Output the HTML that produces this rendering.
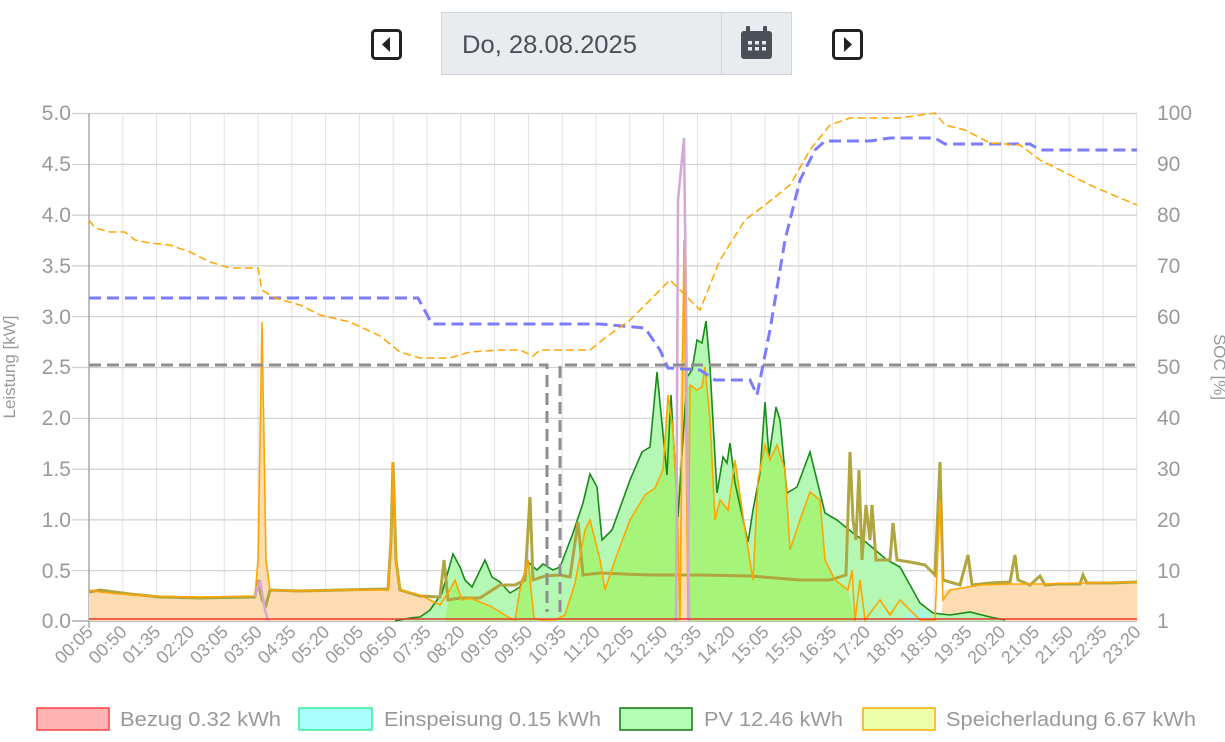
<!DOCTYPE html>
<html><head><meta charset="utf-8"><style>
body{margin:0;background:#fff;width:1225px;height:742px;overflow:hidden;font-family:"Liberation Sans",sans-serif}
svg{position:absolute;left:0;top:0}
</style></head><body>
<svg width="1225" height="742" viewBox="0 0 1225 742">
<!-- nav -->
<rect x="372.5" y="30.5" width="28" height="28" rx="3" fill="#fff" stroke="#222" stroke-width="3"/>
<path d="M390 37 L382 44.5 L390 52 Z" fill="#222"/>
<rect x="833.5" y="30.5" width="28" height="28" rx="3" fill="#fff" stroke="#222" stroke-width="3"/>
<path d="M844 37 L852 44.5 L844 52 Z" fill="#222"/>
<rect x="441.5" y="12.5" width="350" height="62" fill="#e9ecef" stroke="#ced4da"/>
<line x1="721.5" y1="12.5" x2="721.5" y2="74.5" stroke="#ced4da"/>
<text x="462" y="53" font-size="25" fill="#495057" textLength="175" lengthAdjust="spacingAndGlyphs">Do, 28.08.2025</text>
<rect x="741" y="31" width="31" height="28" rx="3" fill="#495057"/>
<rect x="746" y="26" width="4" height="7" rx="1" fill="#495057"/>
<rect x="763" y="26" width="4" height="7" rx="1" fill="#495057"/>
<rect x="744" y="38" width="25" height="18" fill="#495057"/>
<g fill="#e9ecef"><rect x="748" y="41" width="4" height="3.5"/><rect x="755" y="41" width="4" height="3.5"/><rect x="762" y="41" width="4" height="3.5"/><rect x="748" y="47" width="4" height="3.5"/><rect x="755" y="47" width="4" height="3.5"/><rect x="762" y="47" width="4" height="3.5"/></g>
<!-- grid -->
<g stroke="#e2e2e2" stroke-width="1">
<path d="M89 113V621M122.8 113V621M156.6 113V621M190.4 113V621M224.2 113V621M258 113V621M291.8 113V621M325.6 113V621M359.4 113V621M393.2 113V621M427 113V621M460.8 113V621M494.6 113V621M528.4 113V621M562.2 113V621M596 113V621M629.8 113V621M663.6 113V621M697.4 113V621M731.2 113V621M765 113V621M798.8 113V621M832.6 113V621M866.4 113V621M900.2 113V621M934 113V621M967.8 113V621M1001.6 113V621M1035.4 113V621M1069.2 113V621M1103 113V621M1136.8 113V621"/>
</g>
<g stroke="#cfcfcf" stroke-width="1.2">
<path d="M72 113.5H1137M72 164.3H1137M72 215.1H1137M72 265.9H1137M72 316.7H1137M72 367.5H1137M72 418.3H1137M72 469.1H1137M72 519.9H1137M72 570.7H1137"/>
</g>
<path d="M72 621H1137M89 113V628" stroke="#aaa" stroke-width="1.5"/>
<!-- y labels -->
<g font-size="21" fill="#999" text-anchor="end">
<text x="71" y="120">5.0</text><text x="71" y="171">4.5</text><text x="71" y="222">4.0</text><text x="71" y="273">3.5</text><text x="71" y="324">3.0</text><text x="71" y="374">2.5</text><text x="71" y="425">2.0</text><text x="71" y="476">1.5</text><text x="71" y="527">1.0</text><text x="71" y="578">0.5</text><text x="71" y="628">0.0</text>
</g>
<g font-size="21" fill="#999">
<text x="1157" y="120">100</text><text x="1157" y="171">90</text><text x="1157" y="222">80</text><text x="1157" y="273">70</text><text x="1157" y="324">60</text><text x="1157" y="374">50</text><text x="1157" y="425">40</text><text x="1157" y="476">30</text><text x="1157" y="527">20</text><text x="1157" y="578">10</text><text x="1157" y="628">1</text>
</g>
<text transform="translate(15,367) rotate(-90)" font-size="17" fill="#999" text-anchor="middle">Leistung [kW]</text>
<text transform="translate(1214,367) rotate(90)" font-size="17" fill="#999" text-anchor="middle">SOC [%]</text>
<!-- peach storage fill -->
<path d="M89 621 L89 590 L100 592 L120 594 L150 596 L200 597 L255 596 L258 560 L262 322 L266 560 L270 590 L300 591 L340 590 L388 590 L391 540 L393 462 L396 560 L400 590 L420 595 L440 605 L440 621 Z" fill="#fcdcb0"/>
<path d="M940 621 L945 590 L980 585 L1010 584 L1040 584 L1080 583 L1137 582 L1137 621 Z" fill="#fcdcb0"/>
<!-- PV fill -->
<path d="M395 621 L410 618 L420 617 L430 610 L442 593 L453 554 L460 567 L465 580 L472 587 L485 560 L492 577 L500 582 L510 593 L520 587 L528 562 L537 570 L543 564 L553 570 L560 567 L573 533 L583 503 L590 474 L597 487 L602 540 L612 530 L630 480 L642 452 L650 447 L657 372 L667 475 L671 395 L678 517 L687 377 L692 370 L697 340 L702 343 L706 321 L710 367 L717 493 L723 457 L727 463 L730 443 L735 483 L748 542 L753 510 L760 473 L765 402 L769 457 L776 407 L780 420 L787 493 L797 487 L810 452 L825 513 L837 520 L853 533 L867 543 L887 560 L900 567 L920 603 L933 613 L950 615 L970 612 L990 617 L1005 620 L1005 621 Z" fill="#b4f8b4"/>
<path d="M445 621 L450 590 L455 580 L462 600 L470 598 L480 602 L490 606 L500 612 L510 618 L515 620 L520 590 L528 560 L534 618 L540 620 L555 620 L565 615 L575 583 L585 530 L590 520 L600 560 L605 590 L615 560 L630 520 L645 495 L655 488 L663 470 L668 395 L673 430 L677 500 L685 390 L690 385 L697 390 L702 387 L705 367 L710 420 L715 520 L720 500 L728 510 L735 460 L745 530 L753 580 L758 480 L765 445 L770 460 L777 445 L785 470 L790 550 L800 520 L810 492 L820 500 L825 560 L835 580 L848 590 L855 621 Z" fill="#a6f57a"/>
<path d="M679 621 L680 400 L684 240 L688 400 L690 621 Z" fill="#fcdcb0"/>
<path d="M903 621 L908 612 L920 608 L930 612 L933 621 Z" fill="#aaf5d8"/>
<path d="M395 621 L410 618 L420 617 L430 610 L442 593 L453 554 L460 567 L465 580 L472 587 L485 560 L492 577 L500 582 L510 593 L520 587 L528 562 L537 570 L543 564 L553 570 L560 567 L573 533 L583 503 L590 474 L597 487 L602 540 L612 530 L630 480 L642 452 L650 447 L657 372 L667 475 L671 395 L678 517 L687 377 L692 370 L697 340 L702 343 L706 321 L710 367 L717 493 L723 457 L727 463 L730 443 L735 483 L748 542 L753 510 L760 473 L765 402 L769 457 L776 407 L780 420 L787 493 L797 487 L810 452 L825 513 L837 520 L853 533 L867 543 L887 560 L900 567 L920 603 L933 613 L950 615 L970 612 L990 617 L1005 620" fill="none" stroke="#1a8a1a" stroke-width="1.6"/>
<!-- olive house line -->
<path d="M89 592 L100 590 L130 594 L160 597 L200 598 L255 597 L258 580 L262 600 L266 605 L270 590 L300 591 L340 590 L388 589 L391 540 L393 462 L396 560 L400 590 L420 596 L440 597 L444 560 L448 600 L460 598 L480 598 L500 585 L515 585 L525 580 L530 497 L533 580 L545 576 L560 575 L570 577 L578 522 L583 575 L600 573 L650 575 L700 575 L750 576 L800 580 L830 580 L846 575 L850 452 L853 520 L856 540 L859 470 L862 560 L866 505 L870 540 L872 505 L876 560 L890 560 L893 523 L897 560 L910 562 L925 565 L935 575 L940 462 L943 580 L960 585 L968 555 L972 585 L990 583 L1010 582 L1015 555 L1018 580 L1030 585 L1040 576 L1045 585 L1060 584 L1080 584 L1083 575 L1087 583 L1110 583 L1137 582" fill="none" stroke="#b0a640" stroke-width="3"/>
<!-- orange storage line -->
<path d="M89 590 L100 592 L120 594 L150 596 L200 597 L255 596 L258 560 L262 322 L266 560 L270 590 L300 591 L340 590 L388 590 L391 540 L393 462 L396 560 L400 590 L420 595 L440 605 L450 590 L455 580 L462 600 L470 598 L480 602 L490 606 L500 612 L510 618 L515 620 L520 590 L528 560 L534 618 L540 620 L555 620 L565 615 L575 583 L585 530 L590 520 L600 560 L605 590 L615 560 L630 520 L645 495 L655 488 L663 470 L668 395 L673 430 L677 500 L680 620 L684 240 L688 620 L690 385 L697 390 L702 387 L705 367 L710 420 L715 520 L720 500 L728 510 L735 460 L745 530 L753 580 L758 480 L765 445 L770 460 L777 445 L785 470 L790 550 L800 520 L810 492 L820 500 L825 560 L835 580 L848 590 L852 570 L855 621 L860 580 L865 620 L880 600 L890 615 L900 600 L920 620 L935 620 L940 500 L943 600 L950 590 L980 585 L1010 584 L1040 584 L1080 583 L1137 582" fill="none" stroke="#ffa500" stroke-width="1.6"/>
<!-- purple -->
<path d="M255 597 L260 580 L265 610 L268 621 M676 621 L678 200 L684 138 L686 300 L689 621" fill="none" stroke="#d4a8d4" stroke-width="2.5"/>
<!-- red baseline -->
<path d="M89 619 L1137 619" stroke="#e33" stroke-width="1.5"/>
<!-- gray dashed -->
<path d="M89 365 L547 365 L547 612 M560 612 L560 365 L1137 365" fill="none" stroke="#8e8e8e" stroke-width="3" stroke-dasharray="12,6"/>
<!-- SOC blue -->
<path d="M89 298 L418 298 L432 324 L600 324 L645 328 L660 350 L668 368 L700 370 L715 380 L750 380 L757 395 L770 330 L785 240 L800 180 L815 150 L825 141 L870 141 L890 138 L935 138 L945 144 L1030 144 L1040 150 L1137 150" fill="none" stroke="#7b7bff" stroke-width="3" stroke-dasharray="12,6"/>
<!-- SOC orange thin -->
<path d="M89 220 L95 228 L110 232 L125 232 L135 240 L150 243 L170 245 L190 252 L210 262 L230 268 L258 268 L262 290 L275 298 L300 305 L320 315 L350 322 L380 336 L400 352 L420 358 L450 358 L470 352 L500 350 L520 350 L533 356 L540 350 L590 350 L605 338 L630 320 L650 300 L670 280 L690 300 L700 310 L720 260 L745 220 L765 205 L790 185 L810 150 L830 125 L850 118 L870 118 L900 118 L935 113 L945 125 L965 130 L990 143 L1020 145 L1040 160 L1060 170 L1090 185 L1120 198 L1137 205" fill="none" stroke="#ffa500" stroke-width="1.5" stroke-dasharray="8,4"/>
<!-- x labels -->
<g font-size="18" fill="#999" text-anchor="end">
<text transform="translate(94,633) rotate(-45)">00:05</text>
<text transform="translate(127.8,633) rotate(-45)">00:50</text>
<text transform="translate(161.6,633) rotate(-45)">01:35</text>
<text transform="translate(195.4,633) rotate(-45)">02:20</text>
<text transform="translate(229.2,633) rotate(-45)">03:05</text>
<text transform="translate(263,633) rotate(-45)">03:50</text>
<text transform="translate(296.8,633) rotate(-45)">04:35</text>
<text transform="translate(330.6,633) rotate(-45)">05:20</text>
<text transform="translate(364.4,633) rotate(-45)">06:05</text>
<text transform="translate(398.2,633) rotate(-45)">06:50</text>
<text transform="translate(432,633) rotate(-45)">07:35</text>
<text transform="translate(465.8,633) rotate(-45)">08:20</text>
<text transform="translate(499.6,633) rotate(-45)">09:05</text>
<text transform="translate(533.4,633) rotate(-45)">09:50</text>
<text transform="translate(567.2,633) rotate(-45)">10:35</text>
<text transform="translate(601,633) rotate(-45)">11:20</text>
<text transform="translate(634.8,633) rotate(-45)">12:05</text>
<text transform="translate(668.6,633) rotate(-45)">12:50</text>
<text transform="translate(702.4,633) rotate(-45)">13:35</text>
<text transform="translate(736.2,633) rotate(-45)">14:20</text>
<text transform="translate(770,633) rotate(-45)">15:05</text>
<text transform="translate(803.8,633) rotate(-45)">15:50</text>
<text transform="translate(837.6,633) rotate(-45)">16:35</text>
<text transform="translate(871.4,633) rotate(-45)">17:20</text>
<text transform="translate(905.2,633) rotate(-45)">18:05</text>
<text transform="translate(939,633) rotate(-45)">18:50</text>
<text transform="translate(972.8,633) rotate(-45)">19:35</text>
<text transform="translate(1006.6,633) rotate(-45)">20:20</text>
<text transform="translate(1040.4,633) rotate(-45)">21:05</text>
<text transform="translate(1074.2,633) rotate(-45)">21:50</text>
<text transform="translate(1108,633) rotate(-45)">22:35</text>
<text transform="translate(1141.8,633) rotate(-45)">23:20</text>
</g>
<!-- legend -->
<g font-size="20" fill="#999">
<rect x="37" y="708" width="72" height="22" fill="#ffb3b3" stroke="#ff4444" stroke-width="1.5"/><text x="120" y="726" textLength="161" lengthAdjust="spacingAndGlyphs">Bezug 0.32 kWh</text>
<rect x="299" y="708" width="73" height="22" fill="#aaffff" stroke="#33ee99" stroke-width="1.5"/><text x="384" y="726" textLength="217" lengthAdjust="spacingAndGlyphs">Einspeisung 0.15 kWh</text>
<rect x="620" y="708" width="72" height="22" fill="#b3ffb3" stroke="#117711" stroke-width="1.5"/><text x="704" y="726" textLength="139" lengthAdjust="spacingAndGlyphs">PV 12.46 kWh</text>
<rect x="863" y="708" width="72" height="22" fill="#eeffaa" stroke="#ffaa00" stroke-width="1.5"/><text x="946" y="726" textLength="250" lengthAdjust="spacingAndGlyphs">Speicherladung 6.67 kWh</text>
</g>
</svg>
</body></html>
